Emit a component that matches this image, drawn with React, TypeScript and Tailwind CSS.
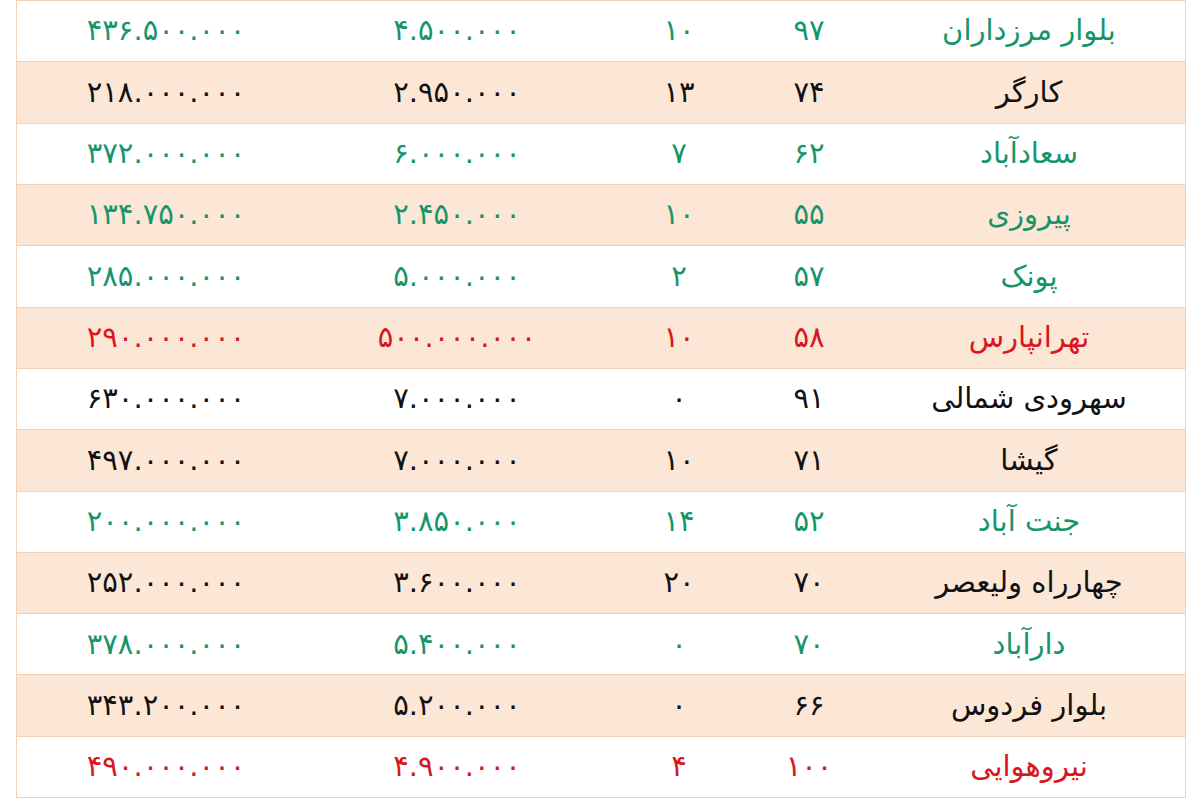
const rows: [string, string, string, string, string, 'g' | 'k' | 'r'][] = [
  ['بلوار مرزداران', '۹۷', '۱۰', '۴.۵۰۰.۰۰۰', '۴۳۶.۵۰۰.۰۰۰', 'g'],
  ['کارگر', '۷۴', '۱۳', '۲.۹۵۰.۰۰۰', '۲۱۸.۰۰۰.۰۰۰', 'k'],
  ['سعادآباد', '۶۲', '۷', '۶.۰۰۰.۰۰۰', '۳۷۲.۰۰۰.۰۰۰', 'g'],
  ['پیروزی', '۵۵', '۱۰', '۲.۴۵۰.۰۰۰', '۱۳۴.۷۵۰.۰۰۰', 'g'],
  ['پونک', '۵۷', '۲', '۵.۰۰۰.۰۰۰', '۲۸۵.۰۰۰.۰۰۰', 'g'],
  ['تهرانپارس', '۵۸', '۱۰', '۵۰۰.۰۰۰.۰۰۰', '۲۹۰.۰۰۰.۰۰۰', 'r'],
  ['سهرودی شمالی', '۹۱', '۰', '۷.۰۰۰.۰۰۰', '۶۳۰.۰۰۰.۰۰۰', 'k'],
  ['گیشا', '۷۱', '۱۰', '۷.۰۰۰.۰۰۰', '۴۹۷.۰۰۰.۰۰۰', 'k'],
  ['جنت آباد', '۵۲', '۱۴', '۳.۸۵۰.۰۰۰', '۲۰۰.۰۰۰.۰۰۰', 'g'],
  ['چهارراه ولیعصر', '۷۰', '۲۰', '۳.۶۰۰.۰۰۰', '۲۵۲.۰۰۰.۰۰۰', 'k'],
  ['دارآباد', '۷۰', '۰', '۵.۴۰۰.۰۰۰', '۳۷۸.۰۰۰.۰۰۰', 'g'],
  ['بلوار فردوس', '۶۶', '۰', '۵.۲۰۰.۰۰۰', '۳۴۳.۲۰۰.۰۰۰', 'k'],
  ['نیروهوایی', '۱۰۰', '۴', '۴.۹۰۰.۰۰۰', '۴۹۰.۰۰۰.۰۰۰', 'r'],
];

const colors = {
  g: 'text-[#17956a]',
  k: 'text-[#111111]',
  r: 'text-[#d9161e]',
};

export default function App() {
  return (
    <div className="h-[800px] w-full bg-white">
      <div
        dir="rtl"
        className="ml-[16px] flex h-[798px] w-[1170px] flex-col border border-[#f0d2ba] font-['DejaVu_Sans',sans-serif] text-[29px]"
      >
        {rows.map((r, i) => (
          <div
            key={i}
            className={`grid flex-1 grid-cols-[328px_96px_164px_280px_302px] items-center border-b border-[#f0d2ba] last:border-b-0 ${
              i % 2 === 1 ? 'bg-[#fce6d6]' : 'bg-white'
            } ${colors[r[5]]}`}
          >
            <span className="pl-4 text-center">{r[0]}</span>
            <span className="text-center">{r[1]}</span>
            <span className="text-center">{r[2]}</span>
            <span dir="ltr" className="text-center">{r[3]}</span>
            <span dir="ltr" className="text-center">{r[4]}</span>
          </div>
        ))}
      </div>
    </div>
  );
}
